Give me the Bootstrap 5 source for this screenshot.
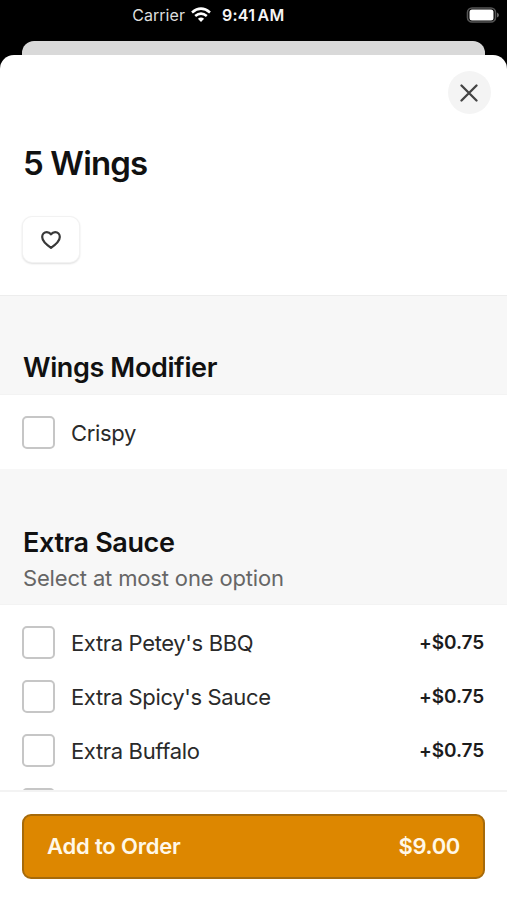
<!DOCTYPE html>
<html lang="en">
<head>
<meta charset="utf-8">
<meta name="viewport" content="width=device-width, initial-scale=1">
<title>5 Wings</title>
<link href="https://cdn.jsdelivr.net/npm/bootstrap@5.3.0/dist/css/bootstrap.min.css" rel="stylesheet">
<style>
body{font-family:Inter,"Liberation Sans",sans-serif;background:#000;color:#111}
.screen{height:900px;max-width:507px}
.status{height:41px;display:grid;grid-template-columns:211px auto 1fr;padding:0 8px 11px 0;font-size:16px;line-height:30px;color:#dedede}
.carrier{letter-spacing:.05px}
.wifi{margin-left:6px}
.clock{font-weight:600;color:#f5f5f5;letter-spacing:.25px;word-spacing:-2px;padding-left:11px}
.behind{height:14px;margin:0 22px;background:#d9d9d9;border-radius:12px 12px 0 0}
.sheet{border-radius:14px 14px 0 0;min-height:0}
.intro{height:241px;padding:16px 16.5px 0 23px;border-bottom:1px solid #ededed}
.close-btn{width:43px;height:43px;background:#f4f4f4}
.item-title{font-size:33px;line-height:40px;font-weight:600;margin:29px 0 34px;letter-spacing:-.85px}
.fav{width:56px;height:45px;border-radius:9px;box-shadow:0 0 0 1px #f2f2f2,0 1px 2px 1px #e0e0e0}
.group-head{background:#f7f7f7;padding:54px 23px 0;border-bottom:1px solid #f3f3f3}
.head-one{height:99px}
.head-two{height:136px;padding-top:56px}
.group-head h2{font-size:27px;line-height:36px;font-weight:600;margin:0;letter-spacing:-.38px}
.hint{font-size:22px;line-height:35px;color:#666;letter-spacing:-.16px}
.options{padding:10px 22px}
.option{height:54px;font-size:22px;color:#2a2a2a;flex:none;letter-spacing:-.35px}
.option .form-check-input{width:33px;height:33px;margin:0;border:2px solid #c6c6c6;border-radius:5px;background-color:#fff}
.option-name{padding-top:2px}
.price{font-size:19px;font-weight:600;color:#1c1c1c;letter-spacing:-.1px;padding:3px 1px 0 0}
.list-one{height:74px}
.list-two{height:185px;padding-bottom:0}
.order-bar{height:110px;padding:22px 22px 0;border-top:2px solid #f3f3f3}
.order-btn{height:65px;border-radius:9px;padding:0 23px;background:#dd8700;border:2px solid #a66a0a;color:#fff8e8;font-size:22px;font-weight:600;letter-spacing:-.18px}
.total{letter-spacing:-.35px}
</style>
</head>
<body>
<div class="screen d-flex flex-column overflow-hidden">
  <header class="status">
    <div class="d-flex justify-content-end align-items-center">
      <span class="carrier">Carrier</span>
      <svg class="wifi" width="20" height="16" viewBox="0 0 20 16" fill="none" stroke="#fff" stroke-width="2.6"><path d="M1 5.4Q10-2 19 5.4"/><path d="M4.2 9Q10 4.2 15.8 9"/><path d="M10 15 6.9 11.8Q10 9.1 13.1 11.8Z" fill="#fff" stroke="none"/></svg>
    </div>
    <span class="clock">9:41 AM</span>
    <div class="d-flex justify-content-end align-items-center">
      <svg width="33" height="17" viewBox="0 0 33 17"><rect x="1.5" y="1" width="28" height="14" rx="4.5" fill="none" stroke="#555" stroke-width="1.6"/><rect x="3.5" y="2.5" width="24" height="11" rx="2.5" fill="#fff"/><path d="M31 5.5v5q2-1 2-2.5t-2-2.5" fill="#666"/></svg>
    </div>
  </header>
  <div class="behind flex-shrink-0"></div>
  <main class="sheet bg-white flex-grow-1 d-flex flex-column overflow-hidden">
    <section class="intro flex-shrink-0">
      <div class="d-flex justify-content-end">
        <button class="close-btn btn rounded-circle border-0 p-0 d-flex align-items-center justify-content-center" aria-label="Close">
          <svg width="18" height="18" viewBox="0 0 18 18" stroke="#444" stroke-width="2.3" stroke-linecap="round"><path d="m1.5 1.5 15 15m0-15-15 15"/></svg>
        </button>
      </div>
      <h1 class="item-title">5 Wings</h1>
      <button class="fav btn bg-white border-0 p-0 d-flex align-items-center justify-content-center" aria-label="Favorite">
        <svg width="20" height="18" viewBox="0 0 20 18" fill="none" stroke="#383838" stroke-width="2.2" stroke-linejoin="round"><path d="M10 3.3C8.8 1.8 7.3 1.2 5.8 1.2 3.1 1.2 1.2 3.3 1.2 6c0 4.3 4.3 7.7 8.8 10.8 4.5-3.1 8.8-6.5 8.8-10.8 0-2.7-1.9-4.8-4.6-4.8-1.5 0-3 .6-4.2 2.1Z"/></svg>
      </button>
    </section>
    <div class="group-head head-one flex-shrink-0"><h2>Wings Modifier</h2></div>
    <div class="options list-one flex-shrink-0">
      <label class="option d-flex align-items-center gap-3"><input class="form-check-input" type="checkbox"><span class="option-name">Crispy</span></label>
    </div>
    <div class="group-head head-two flex-shrink-0"><h2>Extra Sauce</h2><div class="hint">Select at most one option</div></div>
    <div class="options list-two d-flex flex-column overflow-hidden flex-shrink-0">
      <label class="option d-flex align-items-center gap-3"><input class="form-check-input" type="checkbox"><span class="option-name">Extra Petey's BBQ</span><span class="price ms-auto">+$0.75</span></label>
      <label class="option d-flex align-items-center gap-3"><input class="form-check-input" type="checkbox"><span class="option-name">Extra Spicy's Sauce</span><span class="price ms-auto">+$0.75</span></label>
      <label class="option d-flex align-items-center gap-3"><input class="form-check-input" type="checkbox"><span class="option-name">Extra Buffalo</span><span class="price ms-auto">+$0.75</span></label>
      <div class="option d-flex align-items-center"><input class="form-check-input" type="checkbox" aria-label="More"></div>
    </div>
    <footer class="order-bar bg-white flex-shrink-0">
      <button class="order-btn btn w-100 d-flex align-items-center justify-content-between"><span>Add to Order</span><span class="total">$9.00</span></button>
    </footer>
  </main>
</div>
<script src="https://cdn.jsdelivr.net/npm/bootstrap@5.3.0/dist/js/bootstrap.bundle.min.js"></script>
</body>
</html>
